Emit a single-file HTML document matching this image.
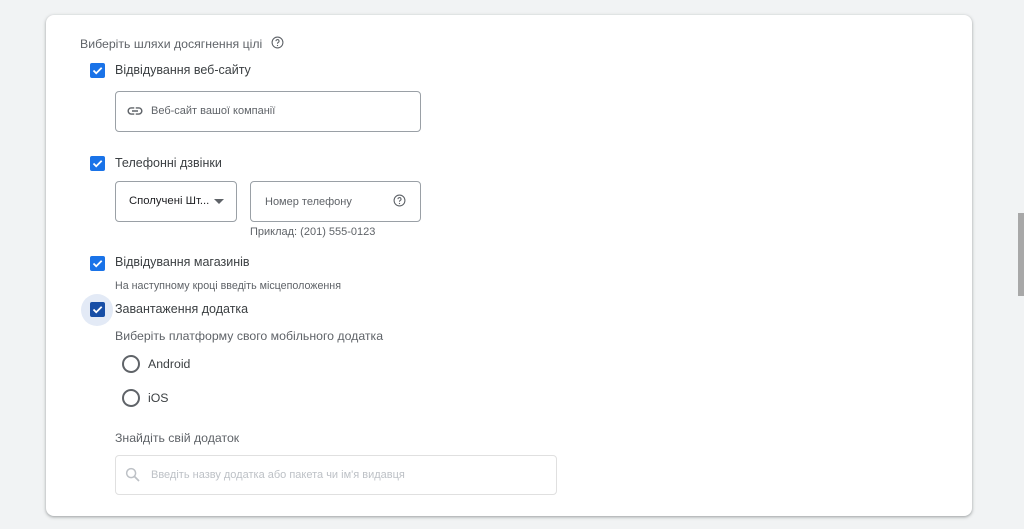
<!DOCTYPE html>
<html><head><meta charset="utf-8"><style>
*{box-sizing:border-box;margin:0;padding:0}
body{width:1024px;height:529px;background:#f1f3f4;font-family:"Liberation Sans",Roboto,sans-serif;position:relative;overflow:hidden;color:#3c4043}
.card{position:absolute;left:46px;top:15px;width:926px;height:501px;background:#fff;border-radius:8px;box-shadow:0 1px 2px rgba(60,64,67,.3),0 1px 3px 1px rgba(60,64,67,.15)}
.a{position:absolute;white-space:nowrap}
.cb{position:absolute;width:15px;height:15px;background:#1a73e8;border-radius:2px}
.cb svg{position:absolute;left:1px;top:1px}
.box{position:absolute;border:1px solid #9aa0a6;border-radius:4px}
.radio{position:absolute;width:18px;height:18px;border:2px solid #5f6368;border-radius:50%}
</style></head><body>
<div class="card"></div>
<div class="a" style="left:80px;top:37px;font-size:12.3px;color:#5f6368">Виберіть шляхи досягнення цілі</div>
<svg class="a" style="left:271px;top:36px" width="13" height="13" viewBox="0 0 24 24"><circle cx="12" cy="12" r="10" fill="none" stroke="#5f6368" stroke-width="2"/><path d="M9.2 9.5a2.8 2.8 0 1 1 4 2.5c-.8.4-1.2 1-1.2 1.8v.4" fill="none" stroke="#5f6368" stroke-width="2"/><circle cx="12" cy="17.5" r="1.2" fill="#5f6368"/></svg>

<div class="cb" style="left:90px;top:63px"><svg width="13" height="13" viewBox="0 0 13 13"><path d="M2.5 6.5l2.7 2.7 5.5-5.5" fill="none" stroke="#fff" stroke-width="1.8"/></svg></div>
<div class="a" style="left:115px;top:63px;font-size:12.5px">Відвідування веб-сайту</div>
<div class="box" style="left:115px;top:91px;width:306px;height:41px"></div>
<svg class="a" style="left:126px;top:102px" width="18" height="18" viewBox="0 0 24 24"><path d="M3.9 12c0-1.71 1.39-3.1 3.1-3.1h4V7H7c-2.76 0-5 2.240-5 5s2.24 5 5 5h4v-1.9H7c-1.71 0-3.1-1.39-3.1-3.1zM8 13h8v-2H8v2zm9-6h-4v1.9h4c1.71 0 3.1 1.39 3.1 3.1s-1.39 3.1-3.1 3.1h-4V17h4c2.76 0 5-2.24 5-5s-2.24-5-5-5z" fill="#5f6368"/></svg>
<div class="a" style="left:151px;top:105px;font-size:11px;color:#5f6368">Веб-сайт вашої компанії</div>

<div class="cb" style="left:90px;top:156px"><svg width="13" height="13" viewBox="0 0 13 13"><path d="M2.5 6.5l2.7 2.7 5.5-5.5" fill="none" stroke="#fff" stroke-width="1.8"/></svg></div>
<div class="a" style="left:115px;top:156px;font-size:12.5px">Телефонні дзвінки</div>
<div class="box" style="left:115px;top:181px;width:122px;height:41px"></div>
<div class="a" style="left:129px;top:195px;font-size:11.3px;color:#202124">Сполучені Шт...</div>
<svg class="a" style="left:214px;top:199px" width="10" height="5"><path d="M0 0h10L5 5z" fill="#5f6368"/></svg>
<div class="box" style="left:250px;top:181px;width:171px;height:41px"></div>
<div class="a" style="left:265px;top:196px;font-size:11px;color:#5f6368">Номер телефону</div>
<svg class="a" style="left:393px;top:194px" width="13" height="13" viewBox="0 0 24 24"><circle cx="12" cy="12" r="10" fill="none" stroke="#5f6368" stroke-width="2"/><path d="M9.2 9.5a2.8 2.8 0 1 1 4 2.5c-.8.4-1.2 1-1.2 1.8v.4" fill="none" stroke="#5f6368" stroke-width="2"/><circle cx="12" cy="17.5" r="1.2" fill="#5f6368"/></svg>
<div class="a" style="left:250px;top:226px;font-size:11px;color:#5f6368">Приклад: (201) 555-0123</div>

<div class="cb" style="left:90px;top:256px"><svg width="13" height="13" viewBox="0 0 13 13"><path d="M2.5 6.5l2.7 2.7 5.5-5.5" fill="none" stroke="#fff" stroke-width="1.8"/></svg></div>
<div class="a" style="left:115px;top:255px;font-size:12.5px">Відвідування магазинів</div>
<div class="a" style="left:115px;top:280px;font-size:10.7px;color:#5f6368">На наступному кроці введіть місцеположення</div>

<div class="a" style="left:81px;top:294px;width:32px;height:32px;border-radius:50%;background:#e3eaf6"></div>
<div class="cb" style="left:90px;top:302px;background:#174ea6"><svg width="13" height="13" viewBox="0 0 13 13"><path d="M2.5 6.5l2.7 2.7 5.5-5.5" fill="none" stroke="#fff" stroke-width="1.8"/></svg></div>
<div class="a" style="left:115px;top:302px;font-size:12.5px">Завантаження додатка</div>
<div class="a" style="left:115px;top:329px;font-size:12.3px;color:#5f6368">Виберіть платформу свого мобільного додатка</div>
<div class="radio" style="left:122px;top:355px"></div>
<div class="a" style="left:148px;top:357px;font-size:12.3px">Android</div>
<div class="radio" style="left:122px;top:389px"></div>
<div class="a" style="left:148px;top:391px;font-size:12.3px">iOS</div>
<div class="a" style="left:115px;top:431px;font-size:12.3px;color:#5f6368">Знайдіть свій додаток</div>
<div class="box" style="left:115px;top:455px;width:442px;height:40px;border-color:#e0e0e0"></div>
<svg class="a" style="left:124px;top:466px" width="18" height="18" viewBox="0 0 24 24"><circle cx="9.5" cy="9.5" r="6" fill="none" stroke="#bdc1c6" stroke-width="2"/><path d="M14 14l6 6" stroke="#bdc1c6" stroke-width="2.2"/></svg>
<div class="a" style="left:151px;top:469px;font-size:11px;color:#bdc1c6">Введіть назву додатка або пакета чи ім'я видавця</div>

<div class="a" style="left:1018px;top:213px;width:6px;height:83px;background:#a8a8a8"></div>
</body></html>
